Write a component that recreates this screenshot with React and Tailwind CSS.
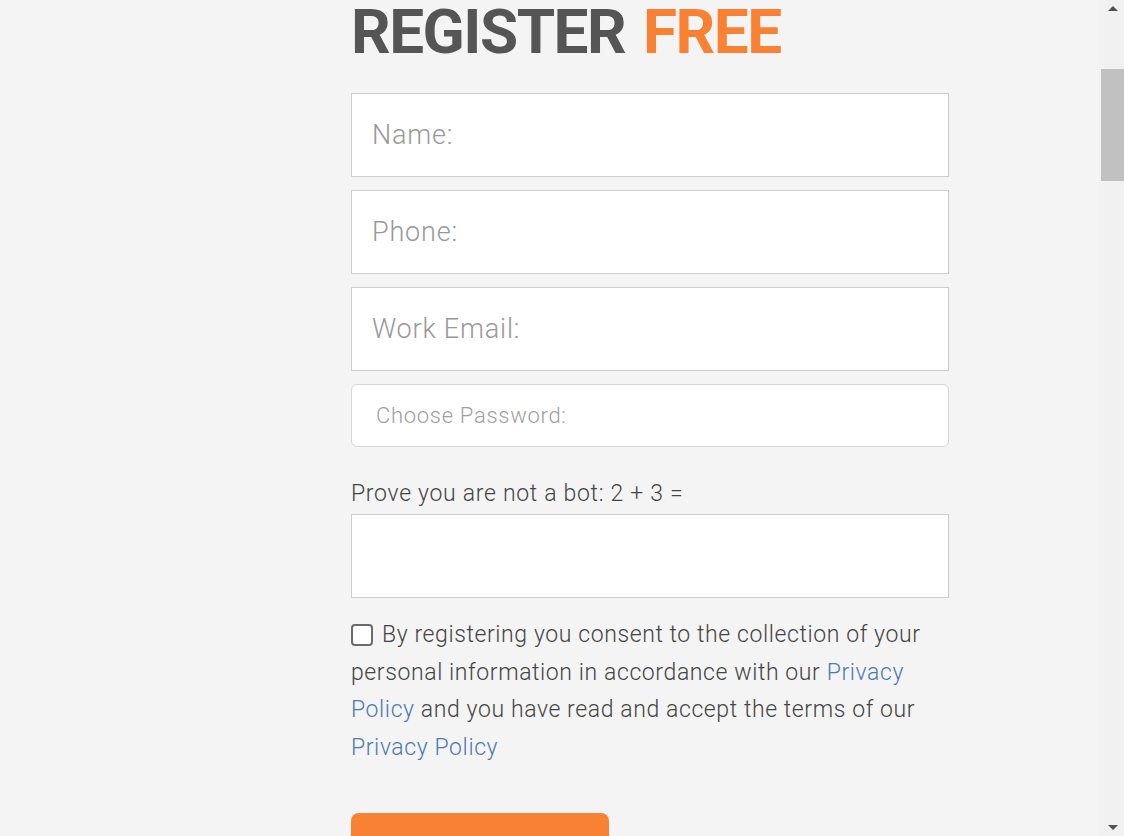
const fields = ['Name:', 'Phone:', 'Work Email:'];

function Scrollbar() {
  return (
    <div className="flex w-[25px] flex-col bg-[#f1f1f1] pl-[2px]">
      <div className="flex h-[17px] items-center justify-center">
        <div className="h-0 w-0 border-x-[5px] border-b-[5px] border-x-transparent border-b-[#505050]" />
      </div>
      <div className="mt-[52px] h-[112px] bg-[#c1c1c1]" />
      <div className="flex-1" />
      <div className="flex h-[17px] items-center justify-center">
        <div className="h-0 w-0 border-x-[5px] border-t-[5px] border-x-transparent border-t-[#505050]" />
      </div>
    </div>
  );
}

export default function App() {
  return (
    <div className="flex h-[836px] overflow-hidden bg-[#f4f4f4] font-['Roboto',sans-serif]">
      <main className="flex-1 pl-[351px]">
        <div className="w-[598px]">
          <h1 className="h-[93px] text-[62px] font-bold leading-[63px] tracking-[-1.5px] text-[#555555]">
            REGISTER <span className="ml-[4px] text-[#f98133]">FREE</span>
          </h1>

          <div className="flex flex-col gap-[13px]">
            {fields.map(f => (
              <input
                key={f}
                placeholder={f}
                className="h-[84px] w-full border border-[#cccccc] bg-white px-5 text-[27px] font-light tracking-[0.8px] text-[#555] outline-none placeholder:text-[#999999]"
              />
            ))}
            <input
              type="password"
              placeholder="Choose Password:"
              className="h-[63px] w-full rounded-[6px] border border-[#d6d6d6] bg-white px-6 text-[22px] font-light tracking-[0.7px] outline-none placeholder:text-[#a0a0a0]"
            />
          </div>

          <label className="mt-[32px] block text-[23px] font-light leading-[30px] tracking-[0.7px] text-[#444444]">
            Prove you are not a bot: 2 + 3 =
          </label>
          <input className="mt-[5px] h-[84px] w-full border border-[#cccccc] bg-white outline-none" />

          <p className="mt-[18px] text-[23px] font-light leading-[37.5px] tracking-[0.6px] text-[#444444]">
            <span className="mr-[9px] inline-block h-[22px] w-[22px] translate-y-[2px] rounded-[4px] border-2 border-[#6b6b6b] bg-white align-[-2px]" />
            By registering you consent to the collection of your personal information in accordance with our{' '}
            <a className="text-[#4f79b0]">Privacy Policy</a> and you have read and accept the terms of our{' '}
            <a className="text-[#4f79b0]">Privacy Policy</a>
          </p>

          <button className="mt-[47px] h-[60px] w-[258px] rounded-[8px] bg-[#f98133]" />
        </div>
      </main>
      <Scrollbar />
    </div>
  );
}
